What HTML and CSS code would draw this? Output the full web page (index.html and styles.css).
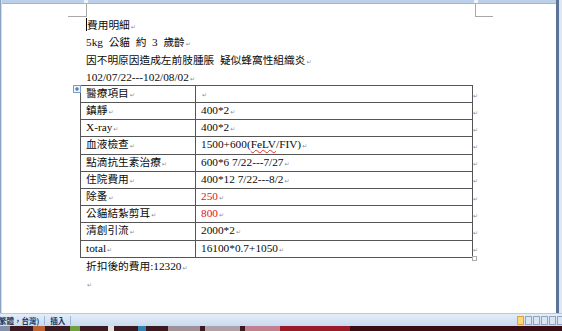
FILE: index.html
```html
<!DOCTYPE html>
<html lang="zh-Hant">
<head>
<meta charset="utf-8">
<title>費用明細</title>
<link rel="stylesheet" href="styles.css">
</head>
<body>
<div class="window">
  <div class="main">
    <div class="edge"></div>
    <div class="pagecol">
      <div class="ruler"><span class="rm rm-l"></span><span class="rm rm-r"></span></div>
      <div class="page">
        <div class="marks"><div class="mark-l"></div><div class="mark-r"></div></div>
        <div class="doc">
          <p class="line"><span class="cursor"></span>費用明細<span class="pm">↵</span></p>
          <p class="line wide"><span class="en">5kg</span> 公貓 約 <span class="en">3</span> 歲齡<span class="pm">↵</span></p>
          <p class="line wide">因不明原因造成左前肢腫脹 疑似蜂窩性組織炎<span class="pm">↵</span></p>
          <p class="line"><span class="en">102/07/22---102/08/02</span><span class="pm">↵</span></p>
          <div class="tablewrap">
            <span class="move"><svg width="6" height="6" viewBox="0 0 6 6"><path d="M3 1v4M1 3h4" stroke="#2a5ea8" stroke-width="1"/></svg></span>
            <table class="fees">
              <colgroup><col class="c1"><col class="c2"><col class="c3"></colgroup>
              <tr><td>醫療項目<span class="pm">↵</span></td><td class="v"><span class="pm">↵</span></td><td class="end"><span class="pm">↵</span></td></tr>
              <tr><td>鎮靜<span class="pm">↵</span></td><td class="v">400*2<span class="pm">↵</span></td><td class="end"><span class="pm">↵</span></td></tr>
              <tr><td><span class="en">X-ray</span><span class="pm">↵</span></td><td class="v">400*2<span class="pm">↵</span></td><td class="end"><span class="pm">↵</span></td></tr>
              <tr><td>血液檢查<span class="pm">↵</span></td><td class="v">1500+600(<span class="spell">FeLV</span>/FIV)<span class="pm">↵</span></td><td class="end"><span class="pm">↵</span></td></tr>
              <tr><td>點滴抗生素治療<span class="pm">↵</span></td><td class="v">600*6 7/22---7/27<span class="pm">↵</span></td><td class="end"><span class="pm">↵</span></td></tr>
              <tr><td>住院費用<span class="pm">↵</span></td><td class="v">400*12 7/22---8/2<span class="pm">↵</span></td><td class="end"><span class="pm">↵</span></td></tr>
              <tr><td>除蚤<span class="pm">↵</span></td><td class="v"><span class="red">250</span><span class="pm">↵</span></td><td class="end"><span class="pm">↵</span></td></tr>
              <tr><td>公貓結紮剪耳<span class="pm">↵</span></td><td class="v"><span class="red">800</span><span class="pm">↵</span></td><td class="end"><span class="pm">↵</span></td></tr>
              <tr><td>清創引流<span class="pm">↵</span></td><td class="v">2000*2<span class="pm">↵</span></td><td class="end"><span class="pm">↵</span></td></tr>
              <tr><td><span class="en">total</span><span class="pm">↵</span></td><td class="v">16100*0.7+1050<span class="pm">↵</span></td><td class="end"><span class="pm">↵</span></td></tr>
            </table>
            <span class="resize"></span>
          </div>
          <p class="line">折扣後的費用<span class="en">:12320</span><span class="pm">↵</span></p>
          <p class="line"><span class="pm">↵</span></p>
        </div>
      </div>
    </div>
    <div class="scroll"></div>
  </div>
  <div class="status">
    <span class="lang">繁體，台灣)</span>
    <span class="sep"></span>
    <span class="mode">插入</span>
    <span class="sep"></span>
    <span class="views"><span class="vi on"></span><span class="vi"></span><span class="vi"></span><span class="vi"></span><span class="vi"></span><span class="vi"></span></span>
  </div>
  <div class="taskbar"></div>
</div>
</body>
</html>
```
FILE: styles.css
```css
html, body {
  margin: 0;
  padding: 0;
}
body {
  width: 562px;
  height: 331px;
  overflow: hidden;
  background: #fff;
  font-family: "Liberation Serif", "Noto Sans CJK TC", serif;
  font-size: 10.7px;
  color: #0a0a0a;
}
.window {
  display: flex;
  flex-direction: column;
  width: 562px;
  height: 331px;
}
.main {
  display: flex;
  height: 313px;
}
.edge {
  width: 2px;
  background: linear-gradient(90deg, #8aa2c4 0 1px, #d3deed 1px);
}
.pagecol {
  width: 554px;
  display: flex;
  flex-direction: column;
  background: #fff;
}
.ruler {
  height: 3px;
  border-bottom: 1px solid #9cb6da;
  background: #bcd0ea;
  display: flex;
}
.rm {
  width: 4px;
  height: 3px;
  background: #eef3fa;
}
.rm-l { margin-left: 82px; }
.rm-r { margin-left: 386px; }
.scroll {
  width: 6px;
  background: linear-gradient(90deg, #5b7397 0 3px, #dfe7f2 3px);
}
.page {
  flex: 1;
}
.marks {
  display: flex;
  height: 13px;
}
.mark-l {
  margin-left: 66px;
  width: 18px;
  height: 12px;
  border-right: 1px solid #a8a8a8;
  border-bottom: 1px solid #a8a8a8;
}
.mark-r {
  margin-left: 388px;
  width: 17px;
  height: 12px;
  border-left: 1px solid #a8a8a8;
  border-bottom: 1px solid #a8a8a8;
}
.doc {
  padding-left: 84px;
}
.line {
  margin: 0;
  height: 17.33px;
  line-height: 17.33px;
  white-space: nowrap;
}
.line.wide {
  word-spacing: 3px;
}
.en, .v {
  font-size: 11.3px;
}
.cursor {
  display: inline-block;
  width: 1px;
  height: 13px;
  background: #000;
  vertical-align: -2px;
}
.pm {
  font-family: "DejaVu Sans", sans-serif;
  font-size: 6px;
  color: #8c8c9c;
  margin-left: 1px;
  word-spacing: 0;
}
.tablewrap {
  position: relative;
  margin-left: -6px;
  margin-top: -1.5px;
  width: 420px;
}
.move {
  position: absolute;
  left: -7px;
  top: 0;
  width: 6px;
  height: 6px;
  border: 1px solid #7d9cc8;
  background: #eef3fb;
  line-height: 0;
}
.resize {
  position: absolute;
  left: 392px;
  bottom: -3px;
  width: 3px;
  height: 3px;
  border: 1px solid #aaa;
  background: #fff;
}
.fees {
  border-collapse: collapse;
  table-layout: fixed;
  width: 412px;
}
.c1 { width: 115px; }
.c2 { width: 277px; }
.c3 { width: 20px; }
.fees tr {
  height: 17.2px;
}
.fees td {
  border: 1px solid #555;
  padding: 0 0 0 5px;
  line-height: 15px;
  white-space: nowrap;
  overflow: hidden;
}
.fees td.end {
  border: none;
  padding-left: 0;
  vertical-align: bottom;
}
.fees td.end .pm {
  margin-left: 0;
}
.red {
  color: #de1414;
}
.spell {
  text-decoration: underline wavy #e03030;
  text-decoration-thickness: 1px;
  text-underline-offset: 1px;
}
.status {
  height: 12px;
  border-top: 1px solid #b5c9e4;
  background: linear-gradient(#e4edf8, #c9dbf0);
  display: flex;
  align-items: center;
  font-family: "Noto Sans CJK TC", sans-serif;
  font-size: 7.5px;
  font-weight: bold;
  color: #1b3560;
  white-space: nowrap;
}
.lang {
  margin-left: -1px;
}
.sep {
  width: 1px;
  height: 9px;
  background: #9fb6d6;
  margin: 0 5px;
}
.views {
  margin-left: auto;
  display: flex;
  gap: 1px;
  margin-right: -2px;
}
.vi {
  width: 5px;
  height: 7px;
  border: 1px solid #8ea6c6;
  background: #dbe5f2;
}
.vi.on {
  border-color: #e0a040;
  background: #fbd878;
}
.taskbar {
  height: 5px;
  background: linear-gradient(90deg, #8090a8 0 10px, #3a1a20 10px 33px, #c06030 33px 45px, #3a1a20 45px 70px, #70a040 70px 80px, #3a1a20 80px 108px, #e0e0e0 108px 114px, #3a1a20 114px 138px, #3080b0 138px 146px, #3a1a20 146px 168px, #a09098 168px 200px, #3a1a20 200px 205px, #b0a0a8 205px 240px, #3a1a20 240px 245px, #c08090 245px 280px, #9a1a2a 280px 350px, #3a0c14 350px);
}
```
